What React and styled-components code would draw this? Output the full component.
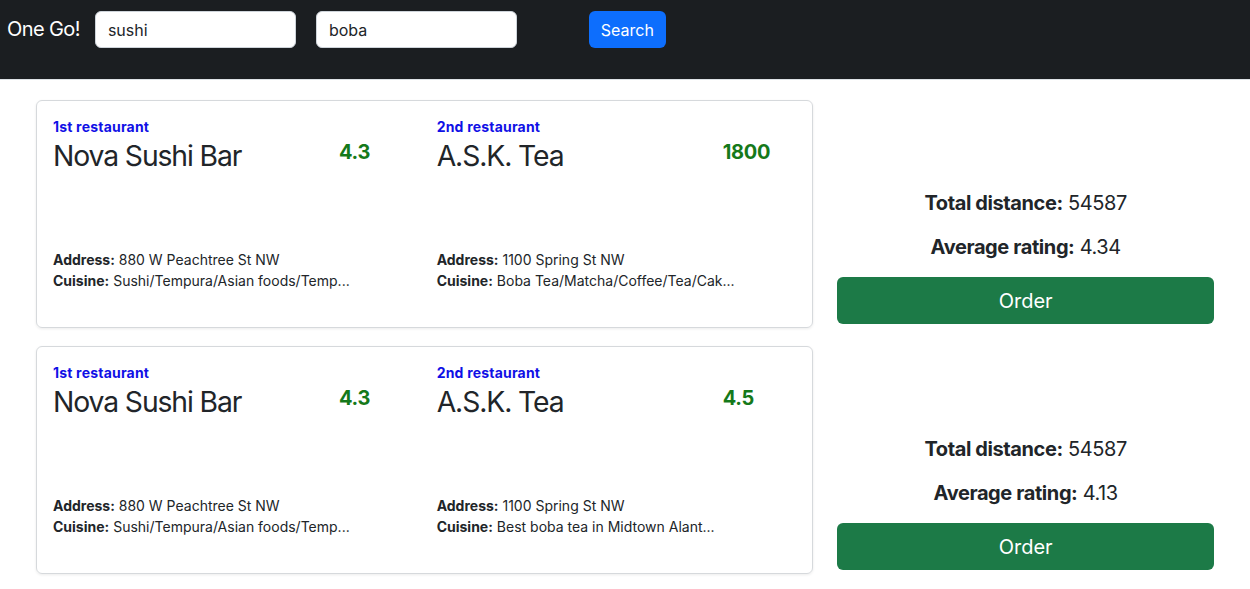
import React, { useState } from 'react'
import styled, { createGlobalStyle } from 'styled-components'

const GlobalStyle = createGlobalStyle`
    * {
        box-sizing: border-box;
    }

    body {
        margin: 0;
        font-family: Inter, "Noto Sans", "Liberation Sans", sans-serif;
        color: #212529;
        background: #fff;
        font-size: 16px;
        line-height: 1.5;
    }
`

const Navbar = styled.nav`
    height: 80px;
    background: #1b1e21;
    border-bottom: 1px solid #dee2e6;
    display: flex;
    align-items: flex-start;
    padding: 11px 7px 0 7px;
`

const Brand = styled.span`
    color: #fff;
    font-size: 20px;
    font-weight: 400;
    line-height: 37px;
    margin-right: 15px;
    letter-spacing: -0.6px;
`

const SearchInput = styled.input`
    width: 201px;
    height: 37px;
    border: 1px solid #ced4da;
    border-radius: 6px;
    padding: 6px 12px;
    font-family: inherit;
    font-size: 16px;
    color: #212529;
    margin-right: ${props => props.$gap}px;
    outline: none;
`

const SearchButton = styled.button`
    height: 37px;
    width: 77px;
    border: none;
    border-radius: 6px;
    background: #0d6efd;
    color: #fff;
    font-family: inherit;
    font-size: 16px;
    cursor: pointer;
`

const Results = styled.main`
    padding: 20px 36px;
    display: flex;
    flex-direction: column;
    gap: 18px;
`

const ResultRow = styled.section`
    display: grid;
    grid-template-columns: calc((100% + 24px) * 8 / 12 - 24px) 1fr;
    column-gap: 24px;
`

const Card = styled.div`
    height: 228px;
    border: 1px solid #d6d9dc;
    border-radius: 6px;
    box-shadow: 0 1px 3px rgba(0, 0, 0, 0.08);
    padding: 16px;
    display: grid;
    grid-template-columns: 1fr 1fr;
    column-gap: 24px;
`

const Restaurant = styled.div`
    display: flex;
    flex-direction: column;
`

const Label = styled.div`
    color: #1010e6;
    font-weight: 700;
    font-size: 14px;
    line-height: 21px;
    letter-spacing: 0.2px;
    margin-top: -1px;
`

const Heading = styled.div`
    display: grid;
    grid-template-columns: 286px 1fr;
    align-items: start;
`

const Name = styled.h3`
    margin: 3px 0 0 0;
    font-size: 28.3px;
    font-weight: 400;
    line-height: 1.2;
    letter-spacing: -1.1px;
`

const Rating = styled.h5`
    margin: 0;
    color: #15791a;
    font-size: 20px;
    font-weight: 700;
    line-height: 1.2;
    padding-top: 3px;
    letter-spacing: -0.3px;
`

const Details = styled.div`
    margin-top: auto;
    padding-bottom: 20px;
    font-size: 14px;
    line-height: 21px;

    p {
        margin: 0;
        white-space: nowrap;
    }

    b {
        font-weight: 700;
    }
`

const Summary = styled.div`
    display: flex;
    flex-direction: column;
    justify-content: flex-end;
    align-items: stretch;
    padding-bottom: 4px;
    text-align: center;
`

const Stat = styled.h5`
    margin: 0 0 20px 0;
    font-size: 20px;
    font-weight: 400;
    line-height: 24px;
    letter-spacing: -0.4px;

    b {
        font-weight: 700;
    }

    &:last-of-type {
        margin-bottom: 18px;
    }
`

const OrderButton = styled.button`
    height: 47px;
    border: none;
    border-radius: 6px;
    background: #1c7a47;
    color: #fff;
    font-family: inherit;
    font-size: 20px;
    cursor: pointer;
`

const pairs = [
    {
        first: {
            name: 'Nova Sushi Bar',
            score: '4.3',
            address: '880 W Peachtree St NW',
            cuisine: 'Sushi/Tempura/Asian foods/Temp...',
        },
        second: {
            name: 'A.S.K. Tea',
            score: '1800',
            address: '1100 Spring St NW',
            cuisine: 'Boba Tea/Matcha/Coffee/Tea/Cak...',
        },
        distance: 54587,
        rating: '4.34',
    },
    {
        first: {
            name: 'Nova Sushi Bar',
            score: '4.3',
            address: '880 W Peachtree St NW',
            cuisine: 'Sushi/Tempura/Asian foods/Temp...',
        },
        second: {
            name: 'A.S.K. Tea',
            score: '4.5',
            address: '1100 Spring St NW',
            cuisine: 'Best boba tea in Midtown Alant...',
        },
        distance: 54587,
        rating: '4.13',
    },
]

function RestaurantInfo({ label, place }) {
    return (
        <Restaurant>
            <Label>{label}</Label>
            <Heading>
                <Name>{place.name}</Name>
                <Rating>{place.score}</Rating>
            </Heading>
            <Details>
                <p><b>Address:</b> {place.address}</p>
                <p><b>Cuisine:</b> {place.cuisine}</p>
            </Details>
        </Restaurant>
    )
}

function App() {
    const [first, setFirst] = useState('sushi')
    const [second, setSecond] = useState('boba')

    return (
        <>
            <GlobalStyle />
            <Navbar>
                <Brand>One Go!</Brand>
                <SearchInput $gap={20} value={first} onChange={e => setFirst(e.target.value)} />
                <SearchInput $gap={72} value={second} onChange={e => setSecond(e.target.value)} />
                <SearchButton>Search</SearchButton>
            </Navbar>
            <Results>
                {pairs.map((pair, index) => (
                    <ResultRow key={index}>
                        <Card>
                            <RestaurantInfo label="1st restaurant" place={pair.first} />
                            <RestaurantInfo label="2nd restaurant" place={pair.second} />
                        </Card>
                        <Summary>
                            <Stat><b>Total distance:</b> {pair.distance}</Stat>
                            <Stat><b>Average rating:</b> {pair.rating}</Stat>
                            <OrderButton>Order</OrderButton>
                        </Summary>
                    </ResultRow>
                ))}
            </Results>
        </>
    )
}

export default App
